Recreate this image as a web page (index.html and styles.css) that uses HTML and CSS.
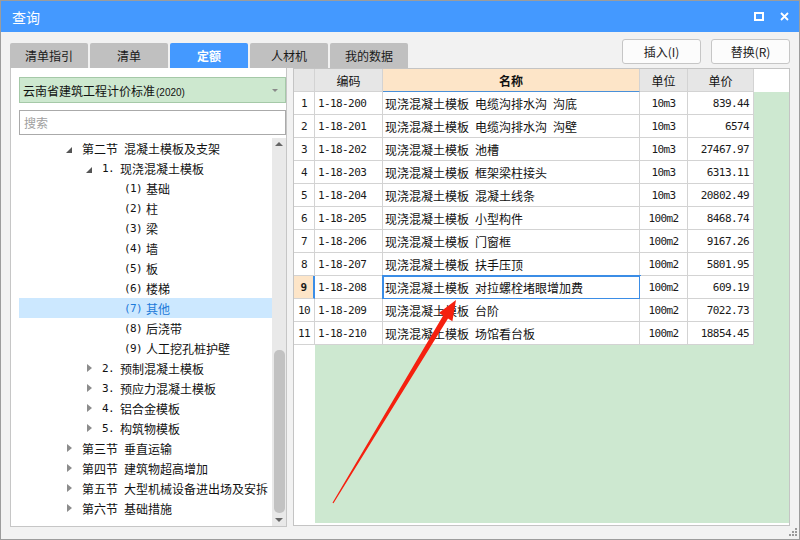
FILE: index.html
```html
<!DOCTYPE html>
<html lang="zh-CN">
<head>
<meta charset="utf-8">
<title>查询</title>
<link rel="stylesheet" href="styles.css">
</head>
<body>
<div class="window">
  <div class="titlebar">
    <span class="title">查询</span>
    <div class="win-ctrls">
      <svg class="ic" width="10" height="9" viewBox="0 0 10 9"><rect x="1" y="1" width="8" height="7" fill="none" stroke="#fff" stroke-width="2"/></svg>
      <svg class="ic" width="9" height="9" viewBox="0 0 9 9"><path d="M1 1L8 8M8 1L1 8" stroke="#fff" stroke-width="1.8" fill="none"/></svg>
    </div>
  </div>
  <div class="toolbar">
    <div class="tabs">
      <div class="tab">清单指引</div>
      <div class="tab">清单</div>
      <div class="tab active">定额</div>
      <div class="tab">人材机</div>
      <div class="tab">我的数据</div>
    </div>
    <div class="actions">
      <button class="btn">插入(I)</button>
      <button class="btn">替换(R)</button>
    </div>
  </div>
  <div class="main">
    <div class="left">
      <div class="select"><span>云南省建筑工程计价标准<span class="yr">(2020)</span></span><span class="caret"></span></div>
      <div class="search">搜索</div>
      <div class="tree-wrap">
        <div class="tree">
          <div class="row l1"><span class="tg"><span class="tri-open"></span></span>第二节&ensp;混凝土模板及支架</div>
          <div class="row l2"><span class="tg"><span class="tri-open"></span></span><span class="pfx p2">1.</span>现浇混凝土模板</div>
          <div class="row l3"><span class="pfx p3">(1)</span>基础</div>
          <div class="row l3"><span class="pfx p3">(2)</span>柱</div>
          <div class="row l3"><span class="pfx p3">(3)</span>梁</div>
          <div class="row l3"><span class="pfx p3">(4)</span>墙</div>
          <div class="row l3"><span class="pfx p3">(5)</span>板</div>
          <div class="row l3"><span class="pfx p3">(6)</span>楼梯</div>
          <div class="row l3 sel"><span class="pfx p3">(7)</span>其他</div>
          <div class="row l3"><span class="pfx p3">(8)</span>后浇带</div>
          <div class="row l3"><span class="pfx p3">(9)</span>人工挖孔桩护壁</div>
          <div class="row l2"><span class="tg"><span class="tri-closed"></span></span><span class="pfx p2">2.</span>预制混凝土模板</div>
          <div class="row l2"><span class="tg"><span class="tri-closed"></span></span><span class="pfx p2">3.</span>预应力混凝土模板</div>
          <div class="row l2"><span class="tg"><span class="tri-closed"></span></span><span class="pfx p2">4.</span>铝合金模板</div>
          <div class="row l2"><span class="tg"><span class="tri-closed"></span></span><span class="pfx p2">5.</span>构筑物模板</div>
          <div class="row l1"><span class="tg"><span class="tri-closed"></span></span>第三节&ensp;垂直运输</div>
          <div class="row l1"><span class="tg"><span class="tri-closed"></span></span>第四节&ensp;建筑物超高增加</div>
          <div class="row l1"><span class="tg"><span class="tri-closed"></span></span>第五节&ensp;大型机械设备进出场及安拆</div>
          <div class="row l1"><span class="tg"><span class="tri-closed"></span></span>第六节&ensp;基础措施</div>
        </div>
        <div class="vscroll"><span class="arr-up"></span><span class="thumb"></span><span class="arr-down"></span></div>
      </div>
    </div>
    <div class="grid-panel">
      <div class="grid">
        <div class="c hd"></div>
        <div class="c hd">编码</div>
        <div class="c hd hd-name">名称</div>
        <div class="c hd">单位</div>
        <div class="c hd">单价</div>
        <div class="hd-fill"></div>

        <div class="c rn num">1</div><div class="c code num">1-18-200</div><div class="c name">现浇混凝土模板&ensp;电缆沟排水沟&ensp;沟底</div><div class="c unit num">10m3</div><div class="c price num">839.44</div><div class="fill"></div>
        <div class="c rn num">2</div><div class="c code num">1-18-201</div><div class="c name">现浇混凝土模板&ensp;电缆沟排水沟&ensp;沟壁</div><div class="c unit num">10m3</div><div class="c price num">6574</div><div class="fill"></div>
        <div class="c rn num">3</div><div class="c code num">1-18-202</div><div class="c name">现浇混凝土模板&ensp;池槽</div><div class="c unit num">10m3</div><div class="c price num">27467.97</div><div class="fill"></div>
        <div class="c rn num">4</div><div class="c code num">1-18-203</div><div class="c name">现浇混凝土模板&ensp;框架梁柱接头</div><div class="c unit num">10m3</div><div class="c price num">6313.11</div><div class="fill"></div>
        <div class="c rn num">5</div><div class="c code num">1-18-204</div><div class="c name">现浇混凝土模板&ensp;混凝土线条</div><div class="c unit num">10m3</div><div class="c price num">20802.49</div><div class="fill"></div>
        <div class="c rn num">6</div><div class="c code num">1-18-205</div><div class="c name">现浇混凝土模板&ensp;小型构件</div><div class="c unit num">100m2</div><div class="c price num">8468.74</div><div class="fill"></div>
        <div class="c rn num">7</div><div class="c code num">1-18-206</div><div class="c name">现浇混凝土模板&ensp;门窗框</div><div class="c unit num">100m2</div><div class="c price num">9167.26</div><div class="fill"></div>
        <div class="c rn num">8</div><div class="c code num">1-18-207</div><div class="c name">现浇混凝土模板&ensp;扶手压顶</div><div class="c unit num">100m2</div><div class="c price num">5801.95</div><div class="fill"></div>
        <div class="c rn num rn-cur">9</div><div class="c code num">1-18-208</div><div class="c name cur">现浇混凝土模板&ensp;对拉螺栓堵眼增加费</div><div class="c unit num">100m2</div><div class="c price num">609.19</div><div class="fill"></div>
        <div class="c rn num">10</div><div class="c code num">1-18-209</div><div class="c name">现浇混凝土模板&ensp;台阶</div><div class="c unit num">100m2</div><div class="c price num">7022.73</div><div class="fill"></div>
        <div class="c rn num">11</div><div class="c code num">1-18-210</div><div class="c name">现浇混凝土模板&ensp;场馆看台板</div><div class="c unit num">100m2</div><div class="c price num">18854.45</div><div class="fill"></div>

        <div class="tail-rn"></div>
        <div class="tail-fill"></div>
      </div>
    </div>
  </div>
  <svg class="annot" width="800" height="540" viewBox="0 0 800 540">
    <polygon points="332.5,502.7 443.2,315.6 438.8,313 456,300 452.4,321.2 448,318.6 333.5,503.3" fill="#f5200f"/>
  </svg>
  <svg class="grip" width="8" height="8" viewBox="0 0 8 8">
    <rect x="6" y="0" width="2" height="2" fill="#9a9a9a"/>
    <rect x="3" y="3" width="2" height="2" fill="#9a9a9a"/>
    <rect x="6" y="3" width="2" height="2" fill="#9a9a9a"/>
    <rect x="0" y="6" width="2" height="2" fill="#9a9a9a"/>
    <rect x="3" y="6" width="2" height="2" fill="#9a9a9a"/>
    <rect x="6" y="6" width="2" height="2" fill="#9a9a9a"/>
  </svg>
</div>
</body>
</html>
```
FILE: styles.css
```css
* { box-sizing: border-box; }
html, body { margin: 0; padding: 0; }
body {
  width: 800px;
  height: 540px;
  overflow: hidden;
  font-family: "Noto Sans CJK SC", "Noto Sans", sans-serif;
  font-size: 12px;
  color: #111;
  background: #f2f2f2;
}
.window {
  position: relative;
  width: 800px;
  height: 540px;
  border: 1px solid #9c9c9c;
  background: #f2f2f2;
  display: flex;
  flex-direction: column;
}
.titlebar {
  flex: none;
  height: 31px;
  background: #4499ff;
  color: #fff;
  display: flex;
  align-items: center;
  justify-content: space-between;
  padding: 0 10px 0 11px;
}
.title { font-size: 14px; }
.win-ctrls { display: flex; align-items: center; gap: 16px; }
.ic { display: block; }

.toolbar {
  flex: none;
  height: 36px;
  display: flex;
  justify-content: space-between;
  padding: 0 9px;
}
.tabs { display: flex; gap: 2px; align-self: flex-end; }
.tab {
  width: 78px;
  height: 25px;
  background: #c0c0c0;
  border-radius: 2px 2px 0 0;
  display: flex;
  align-items: center;
  justify-content: center;
  color: #1a1a1a;
}
.tab.active { background: #4499ff; color: #fff; font-weight: bold; }
.actions { display: flex; gap: 10px; padding-top: 7px; }
.btn {
  width: 79px;
  height: 25px;
  padding: 0;
  background: #fcfcfc;
  border: 1px solid #c6c6c6;
  border-radius: 3px;
  font: 12px "Noto Sans CJK SC", sans-serif;
  color: #222;
}

.main {
  flex: 1;
  display: flex;
  gap: 6px;
  padding: 0 9px 12px;
  min-height: 0;
}
.left {
  width: 277px;
  flex: none;
  background: #fff;
  border: 1px solid #c6c6c6;
  border-top: none;
  padding-left: 8px;
  display: flex;
  flex-direction: column;
}
.select {
  flex: none;
  height: 26px;
  margin-top: 9px;
  background: #cde8cf;
  border: 1px solid #a5c9a8;
  display: flex;
  align-items: center;
  justify-content: space-between;
  padding: 0 7px 0 3px;
  color: #111;
}
.yr { font-family: "Liberation Sans", sans-serif; font-size: 10px; margin-left: 1px; }
.caret {
  width: 0; height: 0;
  border-left: 3px solid transparent;
  border-right: 3px solid transparent;
  border-top: 3px solid #8a8a8a;
}
.search {
  flex: none;
  height: 25px;
  margin-top: 7px;
  border: 1px solid #aaaaaa;
  background: #fff;
  color: #a0a0a0;
  padding-left: 4px;
  display: flex;
  align-items: center;
}
.tree-wrap {
  flex: 1;
  margin-top: 3px;
  display: flex;
  min-height: 0;
}
.tree { flex: 1; overflow: hidden; }
.row {
  height: 20px;
  display: flex;
  align-items: center;
  white-space: nowrap;
}
.l1 { padding-left: 47px; }
.l2 { padding-left: 67px; }
.l3 { padding-left: 105px; }
.sel { background: #cce8ff; color: #1c7ad9; }
.tg { width: 16px; flex: none; height: 20px; display: flex; align-items: center; }
.tri-open {
  width: 0; height: 0;
  border-left: 6px solid transparent;
  border-bottom: 6px solid #555;
  margin-top: 4px;
}
.tri-closed {
  width: 0; height: 0;
  margin-left: 1px;
  border-top: 4px solid transparent;
  border-bottom: 4px solid transparent;
  border-left: 5px solid #8c8c8c;
}
.pfx {
  flex: none;
  font-family: "DejaVu Sans Mono", monospace;
  font-size: 11px;
  letter-spacing: -0.6px;
}
.p2 { width: 18px; }
.p3 { width: 22px; }
.vscroll {
  width: 14px;
  flex: none;
  background: #e9e9e9;
  display: flex;
  flex-direction: column;
  align-items: center;
}
.arr-up {
  margin-top: 4px;
  width: 0; height: 0;
  border-left: 4px solid transparent;
  border-right: 4px solid transparent;
  border-bottom: 4px solid #666;
}
.thumb {
  margin-top: 204px;
  width: 11px;
  height: 163px;
  border-radius: 5px;
  background: #c2c2c2;
}
.arr-down {
  margin-top: auto;
  margin-bottom: 4px;
  width: 0; height: 0;
  border-left: 4px solid transparent;
  border-right: 4px solid transparent;
  border-top: 4px solid #666;
}

.grid-panel {
  flex: 1;
  background: #fff;
  border: 1px solid #c4c4c4;
  margin-bottom: 1px;
  padding-bottom: 2px;
}
.grid {
  height: 100%;
  display: grid;
  grid-template-columns: 21px 68px 257px 48px 66px 1fr;
  grid-template-rows: repeat(12, 23px) 1fr;
}
.c {
  background: #fff;
  border-right: 1px solid #d3d3d3;
  border-bottom: 1px solid #d3d3d3;
  display: flex;
  align-items: center;
  white-space: nowrap;
  overflow: hidden;
}
.hd { background: #e6e6e6; justify-content: center; }
.hd-name { background: #fde5c8; font-weight: bold; border-bottom-color: #4a90d9; }
.hd-fill { background: #fff; }
.fill { background: #cde8d0; }
.num {
  font-family: "DejaVu Sans Mono", monospace;
  font-size: 11px;
  letter-spacing: -0.6px;
  color: #1a1a1a;
}
.rn { justify-content: center; }
.rn-cur { background: #fde5c8; font-weight: bold; border-right: 2px solid #3b8de6; }
.code { padding-left: 3px; }
.name { padding-left: 2px; }
.cur { outline: 2px solid #3b8de6; outline-offset: -1px; overflow: visible; }
.unit { justify-content: center; }
.price { justify-content: flex-end; padding-right: 4px; }
.tail-rn { background: #fff; }
.tail-fill { grid-column: 2 / 7; background: #cde8d0; }

.annot {
  position: absolute;
  left: -1px;
  top: -1px;
  pointer-events: none;
}
.grip {
  position: absolute;
  right: 2px;
  bottom: 3px;
}
```
